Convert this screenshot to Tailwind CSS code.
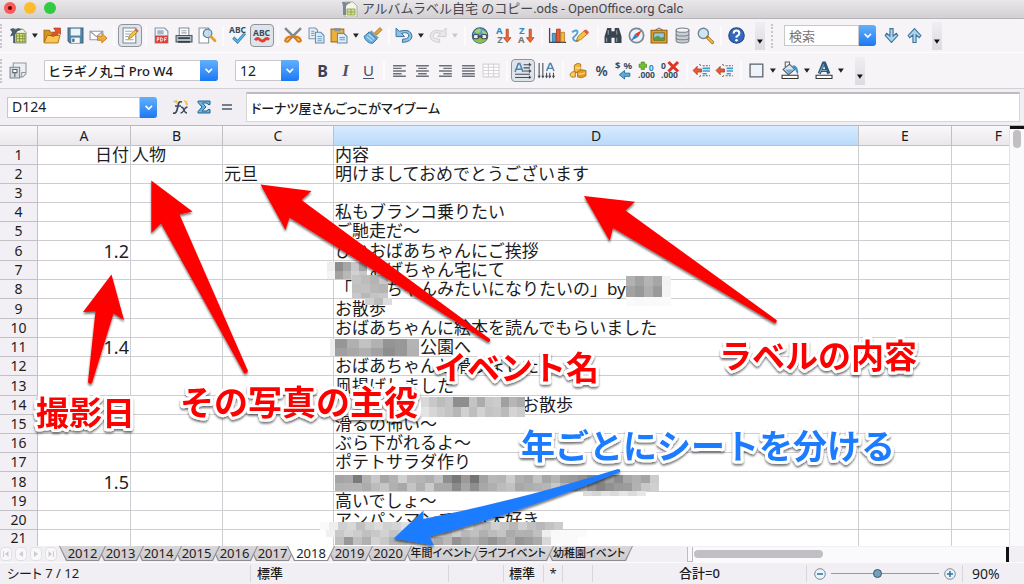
<!DOCTYPE html>
<html lang="ja">
<head>
<meta charset="utf-8">
<title>アルバムラベル自宅 のコピー.ods - OpenOffice.org Calc</title>
<script src="https://cdn.jsdelivr.net/npm/@tailwindcss/browser@4"></script>
</head>
<body class="bg-[#f5f3f6] text-[13px] text-[#1c1c1e] font-['Noto_Sans','Noto_Sans_CJK_JP',sans-serif] overflow-hidden">
<div class="relative flex min-h-screen flex-col">

<!-- Title bar -->
<header class="relative flex h-[19px] items-center justify-center border-b border-[#b5b3b6] bg-linear-to-b from-[#e9e7ea] to-[#d2d0d3]">
  <div class="absolute left-1 top-0.5 flex gap-2">
    <button aria-label="閉じる" class="flex size-3 items-center justify-center rounded-full bg-[#fc5b57]"><span class="size-1 rounded-full bg-[#5c0a08]"></span></button>
    <button aria-label="最小化" class="size-3 rounded-full bg-[#fdbc2e]"></button>
    <button aria-label="拡大" class="size-3 rounded-full bg-[#2fcb43]"></button>
  </div>
  <h1 class="flex items-center gap-1 text-[13px] leading-4 text-[#48464a] font-[Roboto,'Noto_Sans_CJK_JP',sans-serif]">
    <svg class="h-4 w-[17px]" viewBox="0 0 17 16"><path d="M4 1h8l4 4v11H4z" fill="#f2f5ea" stroke="#9aa58b" stroke-width=".8"/><path d="M6 8h8v6H6zM6 11h8M10 8v6" fill="#cfe08d" stroke="#8a9d4a" stroke-width=".8"/><path d="M1 1q3-1 4 1 3-2 5 0-3 0-5 3v9H2V5z" fill="#7b8894"/></svg>
    <span>アルバムラベル自宅 のコピー.ods - OpenOffice.org Calc</span>
  </h1>
</header>

<!-- Standard toolbar -->
<div role="toolbar" aria-label="標準" class="flex h-[34px] items-center border-b border-white bg-[#f6f4f7] [&_button]:flex [&_button]:h-[23px] [&_button]:shrink-0 [&_button]:items-center [&_button]:justify-center [&_svg]:h-[17px] [&_svg]:w-auto [&_svg]:shrink-0 [&_svg]:overflow-visible">
  <span class="mr-[5px] h-6 border-l-2 border-dotted border-[#c8c6ca]"></span>
  <button aria-label="新規" class="w-[23px]"><svg viewBox="0 0 16 16"><path d="M4 2h8l3 3v10H4z" fill="#f1f4e4" stroke="#6e7a55" stroke-width=".8"/><path d="M6 6h8v8H6z" fill="#d8e56c" stroke="#72813a" stroke-width=".8"/><path d="M6 8.500h8M6 11h8M9 6v8M12 6v8" stroke="#72813a" stroke-width=".7"/><path d="M0 2l3-1 2 1.500L8 1l3 1.500L7 4 5 7v8H3V8L0 9l2-4z" fill="#4b5d6b"/></svg></button>
  <button aria-label="新規の種類" class="w-[11px]"><svg viewBox="0 0 6 16"><path d="M0 6h5.500L2.700 10z" fill="#222"/></svg></button>
  <button aria-label="開く" class="w-[23px]"><svg viewBox="0 0 17 16"><path d="M1 14V3h5l1 2h7v9z" fill="#d99220" stroke="#a96a12"/><path d="M1 15l3-7h12l-2 7z" fill="#fbc654" stroke="#a96a12" stroke-width=".8"/><path d="M7 8l5-4-2-3h6.500v6l-2-1.500L10 9z" fill="#e2562a" stroke="#a9340f" stroke-width=".6"/></svg></button>
  <button aria-label="保存" class="w-[23px]"><svg viewBox="0 0 16 16"><path d="M1 1h14v14H3l-2-2z" fill="#4f86a8" stroke="#3a6179"/><path d="M3.500 1.500h9v6.500h-9z" fill="#edf5fa"/><path d="M4 10h8v5H4z" fill="#f4f8fb"/><path d="M5 11h2v3H5z" fill="#3a6179"/></svg></button>
  <button aria-label="メール" class="w-[23px]"><svg viewBox="0 0 17 16"><path d="M1 4h12v8H1z" fill="#fff" stroke="#9098a2"/><path d="M1 4l6 5 6-5" fill="none" stroke="#9098a2"/><path d="M8 8.500h4V6l5 4.500-5 4.500v-2.500H8z" fill="#f2a93b" stroke="#b7741a" stroke-width=".7"/></svg></button>
  <span class="mx-[3px] h-5 w-0.5 bg-[#fbfafc]"></span>
  <button aria-label="編集" aria-pressed="true" class="w-6 rounded-sm border border-[#8f949c] bg-[#dfe4ea]"><svg viewBox="0 0 16 16"><path d="M1 1h12v14H1z" fill="#fff" stroke="#7b8794"/><path d="M3 4h7M3 6.500h5M3 9h3M3 12h8" stroke="#9aa6b4"/><path d="M6 11l1-3 6-6 2 2-6 6z" fill="#f6c343" stroke="#a0701a" stroke-width=".7"/><path d="M12 3l1.500-1.500 2 2L14 5z" fill="#e4584e"/></svg></button>
  <span class="mx-[3px] h-5 w-0.5 bg-[#fbfafc]"></span>
  <button aria-label="PDF" class="w-[23px]"><svg viewBox="0 0 16 16"><path d="M2 1h9l3 3v11H2z" fill="#f3f5f7" stroke="#8a94a0"/><path d="M4 3h6v4H4z" fill="#9fb8d0"/><path d="M2 8h12v7H2z" fill="#dd3b32"/><path d="M4 13.500V10h1.500v1.800H4M7.200 10v3.500q2 0 2-1.700t-2-1.800M11 13.500V10h2M11 11.800h1.500" fill="none" stroke="#fff" stroke-width=".8"/></svg></button>
  <button aria-label="印刷" class="w-[23px]"><svg viewBox="0 0 17 16"><path d="M4 1h9v7H4z" fill="#fff" stroke="#7f8a95"/><path d="M6 3.500h5M6 5.500h5" stroke="#9aa6b4"/><path d="M1 8h15v6H1z" fill="#b4bcc3" stroke="#4c565f"/><path d="M3 10.500h11M3 14h11" stroke="#36404a" stroke-width="1.500"/></svg></button>
  <button aria-label="印刷プレビュー" class="w-[23px]"><svg viewBox="0 0 17 16"><path d="M1 1h9v14H1z" fill="#fff" stroke="#8a94a0"/><circle cx="9" cy="6" r="4" fill="#b9dcf2" fill-opacity=".9" stroke="#6d7f90" stroke-width="1.200"/><path d="M12 9l4 4" stroke="#e0a12c" stroke-width="2.500" stroke-linecap="round"/></svg></button>
  <span class="mx-[3px] h-5 w-0.5 bg-[#fbfafc]"></span>
  <button aria-label="スペルチェック" class="w-[23px]"><svg viewBox="0 0 17 16"><text x="0" y="6" font-size="8" font-weight="700" fill="#3a4c60">ABC</text><path d="M4 10l4 4 7-8" fill="none" stroke="#2c7fb5" stroke-width="2.800"/><path d="M4 10l4 4 7-8" fill="none" stroke="#6fc0ea" stroke-width="1.100"/></svg></button>
  <button aria-label="自動スペルチェック" aria-pressed="true" class="w-6 rounded-sm border border-[#8f949c] bg-[#dfe4ea]"><svg viewBox="0 0 17 16"><text x="0" y="8" font-size="8" font-weight="700" fill="#3a4c60">ABC</text><path d="M2 12.500q2-3 4.500-.5t4.500 0 4 0" fill="none" stroke="#e0412f" stroke-width="2.800"/></svg></button>
  <span class="mx-[3px] h-5 w-0.5 bg-[#fbfafc]"></span>
  <button aria-label="切り取り" class="w-[23px]"><svg viewBox="0 0 17 16"><path d="M1 1l10 10M16 1L6 11" stroke="#7d8790" stroke-width="2.200"/><path d="M10 9q5 0 6 4-3 3-6-4zM7 9q-5 0-6 4 3 3 6-4z" fill="#f7c27a" stroke="#d97c15" stroke-width="1.800"/></svg></button>
  <button aria-label="コピー" class="w-[23px]"><svg viewBox="0 0 16 16"><path d="M1 1h6l2 2v8H1z" fill="#e7f0f8" stroke="#7d93a8"/><path d="M7 5h5l3 3v7H7z" fill="#d7e9f6" stroke="#6b8aa5"/><path d="M3 4h3M3 6h3M3 8h3M9 9h4M9 11h4M9 13h4" stroke="#6fa3c8"/></svg></button>
  <button aria-label="貼り付け" class="w-[23px]"><svg viewBox="0 0 17 16"><path d="M1 2h12v12H1z" fill="#eeb03a" stroke="#a8701a"/><path d="M4 1h6v3H4z" fill="#8b949d"/><path d="M7 6h6l3 3v6H7z" fill="#dcecf8" stroke="#6b8aa5"/><path d="M9 10h5M9 12h5" stroke="#6fa3c8"/></svg></button>
  <button aria-label="貼り付けの種類" class="w-[11px]"><svg viewBox="0 0 6 16"><path d="M0 6h5.500L2.700 10z" fill="#222"/></svg></button>
  <button aria-label="書式のコピー" class="w-[23px]"><svg viewBox="0 0 17 16"><path d="M10 5.500L15 .5 17 2.500l-5 5z" fill="#e3a23d" stroke="#9b6715" stroke-width=".7"/><path d="M7 3l7 7-2 1.500L5.500 5z" fill="#8a9aa8"/><path d="M5 4.500l7 7-4 4Q2 15 0 9z" fill="#6cb1e0" stroke="#2e6f9e" stroke-width=".9"/><path d="M2.500 9l5 4M4.500 7l5 4.500" stroke="#c3e3f6"/></svg></button>
  <span class="mx-[3px] h-5 w-0.5 bg-[#fbfafc]"></span>
  <button aria-label="元に戻す" class="w-[23px]"><svg viewBox="0 0 17 16"><path d="M1 1v8h8L6 6q7-2 7 2.500-1 3-6 3v3q9-.5 9-6Q15 1 4 4z" fill="#8fc1e3" stroke="#386f99" stroke-width=".9"/></svg></button>
  <button aria-label="元に戻す履歴" class="w-[11px]"><svg viewBox="0 0 6 16"><path d="M0 6h5.500L2.700 10z" fill="#222"/></svg></button>
  <button aria-label="やり直し" disabled class="w-[23px]"><svg viewBox="0 0 17 16"><path d="M16 1v8H8l3-3Q4 4 4 8.500q1 3 6 3v3Q1 14 1 8.500 2 1 13 4z" fill="#e9e7ea" stroke="#cfcdd1" stroke-width=".9"/></svg></button>
  <button aria-label="やり直し履歴" disabled class="w-[11px]"><svg viewBox="0 0 6 16"><path d="M0 6h5.500L2.700 10z" fill="#c9c7cb"/></svg></button>
  <span class="mx-[3px] h-5 w-0.5 bg-[#fbfafc]"></span>
  <button aria-label="ハイパーリンク" class="w-[23px]"><svg viewBox="0 0 17 16"><circle cx="8.500" cy="8" r="7.300" fill="#5da0cc" stroke="#2f5f86"/><path d="M3 4q4-4 6-2 1 3-3 4zM10 3q5 1 5 4l-4-1z" fill="#a8cf6a"/><path d="M1.500 9h14q-1 6-7 6t-7-6z" fill="#8fc04f"/><rect x="2" y="7" width="5.500" height="4" rx="2" fill="#eee" stroke="#3d4a55"/><rect x="9.500" y="7" width="5.500" height="4" rx="2" fill="#eee" stroke="#3d4a55"/><path d="M6 9h5" stroke="#3d4a55" stroke-width="1.500"/></svg></button>
  <button aria-label="昇順" class="w-[23px]"><svg viewBox="0 0 16 16"><text x="1" y="7" font-size="9" font-weight="700" fill="#2a8ac7">A</text><text x="2" y="15" font-size="9" font-weight="700" fill="#777">Z</text><path d="M10.500 2h2v8H15l-3.500 4.500L8 10h2.500z" fill="#ec6a3a" stroke="#b43c12" stroke-width=".7"/></svg></button>
  <button aria-label="降順" class="w-[23px]"><svg viewBox="0 0 16 16"><text x="1" y="7" font-size="9" font-weight="700" fill="#2a8ac7">Z</text><text x="0" y="15" font-size="9" font-weight="700" fill="#777">A</text><path d="M10.500 2h2v8H15l-3.500 4.500L8 10h2.500z" fill="#ec6a3a" stroke="#b43c12" stroke-width=".7"/></svg></button>
  <span class="mx-[3px] h-5 w-0.5 bg-[#fbfafc]"></span>
  <button aria-label="グラフ" class="w-[23px]"><svg viewBox="0 0 17 16"><path d="M1.500 1v13.500H17" fill="none" stroke="#3d4a55" stroke-width="1.200"/><path d="M4 6h3.500v8H4z" fill="#4ea0d4" stroke="#24628c" stroke-width=".7"/><path d="M8 2h3.500v12H8z" fill="#ea5b33" stroke="#9e2e0e" stroke-width=".7"/><path d="M12 5h3.500v9H12z" fill="#f5ba3e" stroke="#a8701a" stroke-width=".7"/></svg></button>
  <button aria-label="図形描画" class="w-[23px]"><svg viewBox="0 0 17 16"><path d="M1 5q4-3 5-1t-4 6q0 4 5 3" fill="none" stroke="#4aa3dc" stroke-width="1.800"/><path d="M5 13l1.500-4L13 3l3 3-7 6z" fill="#f6c343" stroke="#a0701a" stroke-width=".8"/><path d="M12 4l2-2 3 3-2 2z" fill="#e4584e"/></svg></button>
  <span class="mx-[3px] ml-[5px] h-5 w-0.5 bg-[#fbfafc]"></span>
  <button aria-label="検索と置換" class="w-[23px]"><svg viewBox="0 0 17 16"><path d="M3 1h4v3h3V1h4l2.500 8v6H10v-5H7v5H.5V9z" fill="#39444e"/><path d="M2.500 10v4M12 10v4M4 3v4M12 3v4" stroke="#93a1ad"/></svg></button>
  <button aria-label="ナビゲーター" class="w-[23px]"><svg viewBox="0 0 16 16"><circle cx="8" cy="8" r="6.700" fill="#e9f3fb" stroke="#7a8794" stroke-width="1.600"/><path d="M13 3L9.500 9.500l-3-3z" fill="#e0392b"/><path d="M3 13l3.500-6.500 3 3z" fill="#3080c4"/></svg></button>
  <button aria-label="ギャラリー" class="w-[23px]"><svg viewBox="0 0 17 16"><path d="M5 3l3.500-2L12 3" fill="none" stroke="#777"/><path d="M1 3h15v12H1z" fill="#e5a024" stroke="#8f5c10"/><path d="M3.500 5.500h10v7h-10z" fill="#8ccdf0" stroke="#5a3d10" stroke-width=".6"/><path d="M3.500 10l4-2 3 2 3-1v3.500h-10z" fill="#5d9a40"/></svg></button>
  <button aria-label="データソース" class="w-[23px]"><svg viewBox="0 0 16 16"><path d="M2 3v10q0 2 6 2t6-2V3z" fill="#c9ced3" stroke="#79828a"/><ellipse cx="8" cy="3" rx="6" ry="2" fill="#f2f4f6" stroke="#79828a"/><path d="M2 6.500q0 2 6 2t6-2M2 10q0 2 6 2t6-2" fill="none" stroke="#79828a"/></svg></button>
  <button aria-label="ズーム" class="w-[23px]"><svg viewBox="0 0 16 16"><circle cx="6" cy="6" r="4.800" fill="#cbe6f7" stroke="#77848f" stroke-width="1.300"/><path d="M10 10l4.500 4.500" stroke="#a0701a" stroke-width="3.200" stroke-linecap="round"/><path d="M10.500 10.500l4 4" stroke="#f3bb45" stroke-width="1.800" stroke-linecap="round"/></svg></button>
  <span class="mx-[3px] h-5 w-0.5 bg-[#fbfafc]"></span>
  <button aria-label="ヘルプ" class="w-[23px]"><svg viewBox="0 0 16 16"><circle cx="8" cy="8" r="7.300" fill="#3568b8" stroke="#234a8d"/><path d="M5.300 6q0-2.700 2.700-2.700T10.700 6Q10.700 7.300 8 9v1.200" fill="none" stroke="#fff" stroke-width="1.900"/><circle cx="8" cy="12.500" r="1.200" fill="#fff"/></svg></button>
  <div class="ml-[7px] mr-1.5 flex h-7 w-[10px] items-end bg-linear-to-b from-[#f0eef2] to-[#dddbdf]"><button aria-label="ツールバーの表示" class="w-[10px]"><svg viewBox="0 0 6 16"><path d="M0 9h5.500L2.700 13z" fill="#111"/></svg></button></div>
  <span class="mr-[11px] h-6 border-l-2 border-dotted border-[#c8c6ca]"></span>
  <div class="flex h-[21px] w-[92px] shrink-0">
    <input aria-label="検索" placeholder="検索" class="w-[75px] min-w-0 border border-[#c9c7cb] bg-white px-1 text-[13px] leading-4 placeholder:text-[#77757a]">
    <button aria-label="検索履歴" class="!h-[21px] w-[17px] rounded-r-[3px] bg-linear-to-b from-[#62b0fb] to-[#1a78f5]"><svg viewBox="0 0 9 16"><path d="M1.500 6.500l3 3 3-3" fill="none" stroke="#fff" stroke-width="1.500"/></svg></button>
  </div>
  <button aria-label="次を検索" class="ml-1 w-[23px]"><svg viewBox="0 0 16 16"><path d="M6.500 1.500h3v7l3-2.500 1.500 2-6 6.500L2 8l1.500-2 3 2.500z" fill="#a9d3ee" stroke="#3f7397"/></svg></button>
  <button aria-label="前を検索" class="w-[23px]"><svg viewBox="0 0 16 16"><path d="M6.500 14.500h3v-7l3 2.500L14 8 8 1.500 2 8l1.500 2 3-2.500z" fill="#a9d3ee" stroke="#3f7397"/></svg></button>
  <div class="ml-1.5 flex h-7 w-[10px] items-end bg-linear-to-b from-[#f0eef2] to-[#dddbdf]"><button aria-label="検索バーの表示" class="w-[10px]"><svg viewBox="0 0 6 16"><path d="M0 9h5.500L2.700 13z" fill="#111"/></svg></button></div>
</div>

<!-- Formatting toolbar -->
<div role="toolbar" aria-label="書式設定" class="flex h-9 items-center border-b border-[#d3d1d5] bg-[#f6f4f7] [&_button]:flex [&_button]:h-[23px] [&_button]:shrink-0 [&_button]:items-center [&_button]:justify-center [&_svg]:h-[17px] [&_svg]:w-auto [&_svg]:shrink-0 [&_svg]:overflow-visible">
  <span class="mr-[5px] h-6 border-l-2 border-dotted border-[#c8c6ca]"></span>
  <button aria-label="スタイル" class="w-[23px]"><svg viewBox="0 0 17 16"><path d="M4 1h12v10l-3 3H4z" fill="#edf0f3" stroke="#8e98a3"/><path d="M1 5h9v10H1z" fill="#d5dae0" stroke="#7b8590"/><path d="M3.500 7h4v3h-4zM5.500 10v4" fill="#fff" stroke="#5f6973"/><path d="M12 14v-4h4" fill="#fff" stroke="#8e98a3"/></svg></button>
  <div class="relative ml-[14px] h-[21px] w-[174px] shrink-0">
    <select aria-label="フォント名" class="h-[21px] w-full appearance-none rounded-r-[3px] border border-[#c9c7cb] bg-white pl-[3px] pr-5 text-[13px] font-medium leading-[18px]"><option>ヒラギノ丸ゴ Pro W4</option></select>
    <span class="pointer-events-none absolute right-0 top-0 flex h-[21px] w-[18px] items-center justify-center rounded-r-[3px] bg-linear-to-b from-[#62b0fb] to-[#1a78f5]"><svg viewBox="0 0 9 16"><path d="M1.500 6.500l3 3 3-3" fill="none" stroke="#fff" stroke-width="1.500"/></svg></span>
  </div>
  <div class="relative ml-[17px] h-[21px] w-16 shrink-0">
    <select aria-label="フォントサイズ" class="h-[21px] w-full appearance-none rounded-r-[3px] border border-[#c9c7cb] bg-white pl-1 pr-5 text-[14px] leading-[18px]"><option>12</option></select>
    <span class="pointer-events-none absolute right-0 top-0 flex h-[21px] w-[18px] items-center justify-center rounded-r-[3px] bg-linear-to-b from-[#62b0fb] to-[#1a78f5]"><svg viewBox="0 0 9 16"><path d="M1.500 6.500l3 3 3-3" fill="none" stroke="#fff" stroke-width="1.500"/></svg></span>
  </div>
  <button aria-label="太字" class="ml-3 w-[23px] text-[16px] font-bold text-[#3b4252]">B</button>
  <button aria-label="斜体" class="w-[23px] font-['Liberation_Serif'] text-[17px] font-bold italic text-[#4b5262]">I</button>
  <button aria-label="下線" class="w-[23px] text-[15px] text-[#4b5262] underline underline-offset-2">U</button>
  <span class="mx-[3px] h-5 w-0.5 bg-[#fbfafc]"></span>
  <button aria-label="左揃え" class="w-[23px]"><svg viewBox="0 0 14 16"><path d="M1 3.500h12M1 6h8M1 8.500h12M1 11h8M1 13.500h12" stroke="#6c7078" stroke-width="1.400"/></svg></button>
  <button aria-label="中央揃え" class="w-[23px]"><svg viewBox="0 0 14 16"><path d="M1 3.500h12M3 6h8M1 8.500h12M3 11h8M1 13.500h12" stroke="#6c7078" stroke-width="1.400"/></svg></button>
  <button aria-label="右揃え" class="w-[23px]"><svg viewBox="0 0 14 16"><path d="M1 3.500h12M5 6h8M1 8.500h12M5 11h8M1 13.500h12" stroke="#6c7078" stroke-width="1.400"/></svg></button>
  <button aria-label="両端揃え" class="w-[23px]"><svg viewBox="0 0 14 16"><path d="M1 3.500h12M1 6h12M1 8.500h12M1 11h12M1 13.500h12" stroke="#6c7078" stroke-width="1.400"/></svg></button>
  <button aria-label="セルの結合" disabled class="w-[23px]"><svg viewBox="0 0 17 16"><path d="M1 2h15v12H1zM1 5h15M1 8h15M1 11h15M6 2v12M11 2v12" fill="#fff" stroke="#d4d2d6"/></svg></button>
  <span class="mx-[3px] h-5 w-0.5 bg-[#fbfafc]"></span>
  <button aria-label="左から右" aria-pressed="true" class="w-6 rounded-sm border border-[#8f949c] bg-[#dfe4ea]"><svg viewBox="0 0 17 16"><path d="M1 9.500L4 1.500h1.500L8.500 9.500M2.300 6.800h5" fill="none" stroke="#4d86b2" stroke-width="1.500"/><path d="M9 2.500h6M9 5.500h6M9 8.500h6M1 11.500h14M1 14.500h14" stroke="#444b55"/><path d="M14 .5l2.500 2-2.500 2zM14 6.500l2.500 2-2.500 2zM14 12.500l2.500 2-2.500 1.500z" fill="#444b55"/></svg></button>
  <button aria-label="上から下" class="w-[23px]"><svg viewBox="0 0 17 16"><path d="M9 8.500L12 1.500h1L16 8.500M10 6h5" fill="none" stroke="#4d86b2" stroke-width="1.400"/><path d="M2 1v13M5.500 1v13M9 10v4M12 10v4M15.500 10v4" stroke="#444b55"/><path d="M.5 13h3L2 15.500zM4 13h3l-1.500 2.500zM7.500 13h3L9 15.500zM10.500 13h3L12 15.500zM14 13h3l-1.500 2.500z" fill="#444b55"/></svg></button>
  <span class="mx-[3px] ml-1 h-5 w-0.5 bg-[#fbfafc]"></span>
  <button aria-label="通貨" class="w-[23px]"><svg viewBox="0 0 17 16"><path d="M5 3q3-3 6-1v8H5z" fill="#f3b53c" stroke="#a96f14" stroke-width=".8"/><path d="M1 12q0-3 5-3v5q-5 1-5-2z" fill="#f7cb66" stroke="#a96f14" stroke-width=".8"/><path d="M8 9q4-3 8-1v5q-4 3-8 1z" fill="#e79d25" stroke="#a96f14" stroke-width=".8"/><path d="M6 5.500h5M9 11q3 1 6-1" stroke="#ffe6a3" fill="none"/></svg></button>
  <button aria-label="パーセント" class="w-[23px] text-[14px] font-semibold text-[#3b4a5c]">%</button>
  <button aria-label="標準の書式" class="w-[23px]"><svg viewBox="0 0 17 16"><text x="0" y="7" font-size="9" font-weight="700" fill="#3a4c60">$</text><text x="8" y="7" font-size="9" font-weight="700" fill="#3a4c60">%</text><path d="M4 12l5-4v2.500h5v3H9V16z" fill="#56aede" stroke="#22658f" stroke-width=".8"/></svg></button>
  <button aria-label="小数点以下の桁を追加" class="w-[23px]"><svg viewBox="0 0 17 16"><path d="M3 0h3v2h2v3H6v2H3V5H1V2h2z" fill="#6fc22d" stroke="#3d7d12" stroke-width=".6"/><text x="10" y="8" font-size="8" font-weight="700" fill="#2a8ac7">0</text><text x="0" y="15" font-size="8" font-weight="700" fill="#3a4c60">.000</text></svg></button>
  <button aria-label="小数点以下の桁を削除" class="w-[23px]"><svg viewBox="0 0 17 16"><text x="0" y="7" font-size="8" font-weight="700" fill="#3a4c60">0</text><text x="0" y="15" font-size="8" font-weight="700" fill="#3a4c60">.000</text><path d="M7 0l9 9M16 0l-9 9" stroke="#dd3424" stroke-width="2.800"/></svg></button>
  <span class="mx-[3px] ml-1 h-5 w-0.5 bg-[#fbfafc]"></span>
  <button aria-label="インデントを減らす" class="w-[23px]"><svg viewBox="0 0 17 16"><path d="M6 2l2 2M6 14l2-2M9 3.500h7M9 13h7" stroke="#666e78" stroke-dasharray="2 1"/><path d="M9 6h7M9 8.500h7M9 11h4" stroke="#3e9bd2" stroke-width="1.500"/><path d="M0 8l4-4v2.500h4v3H4V12z" fill="#e8592f" stroke="#a1300d" stroke-width=".6"/></svg></button>
  <button aria-label="インデントを増やす" class="w-[23px]"><svg viewBox="0 0 17 16"><path d="M6 2l2 2M6 14l2-2M9 3.500h7M9 13h7" stroke="#666e78" stroke-dasharray="2 1"/><path d="M10 6h6M10 8.500h6M10 11h4" stroke="#3e9bd2" stroke-width="1.500"/><path d="M0 8l4-4v2.500h4v3H4V12z" fill="#e8592f" stroke="#a1300d" stroke-width=".6"/></svg></button>
  <span class="mx-[3px] h-5 w-0.5 bg-[#fbfafc]"></span>
  <button aria-label="外枠" class="w-[23px]"><svg viewBox="0 0 14 16"><path d="M1 2h12v12H1z" fill="#eef3f9" stroke="#5b626c" stroke-width="1.200"/></svg></button>
  <button aria-label="外枠の種類" class="w-[11px]"><svg viewBox="0 0 6 16"><path d="M0 6h5.500L2.700 10z" fill="#222"/></svg></button>
  <button aria-label="背景色" class="w-[23px]"><svg viewBox="0 0 17 16"><path d="M2 7l6-5 5 5-6 5z" fill="#dfe6ec" stroke="#55606b"/><path d="M4 7h8l-5 4z" fill="#6fb0d8"/><path d="M4 5V0h4v3" fill="none" stroke="#55606b"/><path d="M11 3q6 0 5 9l-2-3q0-3-3-3z" fill="#3f95cc"/><path d="M1 12.500h15v3H1z" fill="#fff" stroke="#333"/></svg></button>
  <button aria-label="背景色の種類" class="w-[11px]"><svg viewBox="0 0 6 16"><path d="M0 6h5.500L2.700 10z" fill="#222"/></svg></button>
  <button aria-label="フォントの色" class="w-[23px]"><svg viewBox="0 0 17 16"><path d="M4 11L8 1h1l4 10M6 8h5" fill="none" stroke="#2d5876" stroke-width="3"/><path d="M4.200 10.500L8.300 2M6 8h5" stroke="#7fb5d6" stroke-width=".9"/><path d="M1 12.500h15v3H1z" fill="#fff" stroke="#333"/></svg></button>
  <button aria-label="フォントの色の種類" class="w-[11px]"><svg viewBox="0 0 6 16"><path d="M0 6h5.500L2.700 10z" fill="#222"/></svg></button>
  <div class="ml-2 flex h-7 w-[10px] items-end bg-linear-to-b from-[#f0eef2] to-[#dddbdf]"><button aria-label="書式バーの表示" class="w-[10px]"><svg viewBox="0 0 6 16"><path d="M0 9h5.500L2.700 13z" fill="#111"/></svg></button></div>
</div>

<!-- Formula bar -->
<div class="flex h-[37px] items-center border-b border-[#b9b7bb] bg-[#f1eff3] pl-[7px] pr-1">
  <div class="flex h-[21px] w-[150px] shrink-0">
    <input aria-label="名前ボックス" value="D124" class="w-[133px] min-w-0 border border-[#c9c7cb] bg-white px-1 text-[14px] leading-[18px]">
    <button aria-label="名前の一覧" class="flex w-[17px] items-center justify-center rounded-r-[3px] bg-linear-to-b from-[#62b0fb] to-[#1a78f5]"><svg viewBox="0 0 9 16" class="h-[17px]"><path d="M1.500 6.500l3 3 3-3" fill="none" stroke="#fff" stroke-width="1.500"/></svg></button>
  </div>
  <button aria-label="関数ウィザード" class="ml-3 flex w-[23px] justify-center"><svg viewBox="0 0 17 16" class="h-4 w-[17px]"><path d="M1 2l2 1 1-2 1 2 2 0-2 2M12 1l1 2 2-1-1 2 2 1-2 1" fill="#f8cf3f" stroke="#efb81f" stroke-width=".8"/><path d="M1 14q3 1 4-3l1.500-6Q7 2 10 3M3 7h6" fill="none" stroke="#3a4c60" stroke-width="1.700"/><path d="M9 8q2 0 3 3t3 3M15.500 8q-2 0-3.500 3t-3.500 3" fill="none" stroke="#3a4c60" stroke-width="1.400"/></svg></button>
  <button aria-label="合計" class="flex w-[23px] justify-center"><svg viewBox="0 0 16 16" class="h-4 w-4"><path d="M2 2h12v3.500h-2L11 4H6.500L10 8l-4 4h5l1-1.500h2V14H2v-1.500L6 8 2 3.500z" fill="#67b4de" stroke="#22658f"/></svg></button>
  <button aria-label="関数" class="flex w-[23px] justify-center"><svg viewBox="0 0 12 16" class="h-4 w-3"><path d="M1 6h10M1 10h10" stroke="#4c5868" stroke-width="1.600"/></svg></button>
  <input aria-label="数式入力" value="ドーナツ屋さんごっこがマイブーム" class="ml-2 h-[30px] min-w-0 flex-1 border border-t-2 border-[#d8d6da] border-t-[#bdbbbf] bg-white px-1 text-[13px] font-medium [font-feature-settings:'palt']">
</div>

<!-- Sheet -->
<div class="flex">
  <table class="min-w-0 flex-1 table-fixed border-separate border-spacing-0 bg-white [&_td]:overflow-visible [&_td]:whitespace-nowrap [&_td]:border-b [&_td]:border-r [&_td]:border-[#cfcdd1] [&_td]:px-px [&_td]:text-[17px] [&_td]:leading-[18px] [&_th]:border-b [&_th]:border-r [&_th]:border-[#c2c0c4] [&_th]:bg-[#f2f0f4] [&_th]:text-[14px] [&_th]:font-normal [&_th]:leading-[18px]">
    <colgroup><col class="w-[38px]"><col class="w-[93px]"><col class="w-[92px]"><col class="w-[111px]"><col><col class="w-[93px]"><col class="w-[57px]"></colgroup>
    <thead class="h-5 [&_th]:bg-linear-to-b [&_th]:from-[#f9f8fa] [&_th]:to-[#eae8ec]"><tr><th aria-label="すべて選択"></th><th scope="col">A</th><th scope="col">B</th><th scope="col">C</th><th scope="col" class="!from-[#d9ebfe] !to-[#b8dafb]">D</th><th scope="col">E</th><th scope="col" class="!border-r-0 pl-9">F</th></tr></thead>
    <tbody class="[&_tr>td:last-child]:border-r-0 [&_tr>td:nth-child(2)]:text-right">
      <tr class="h-[19px]"><th scope="row">1</th><td>日付</td><td>人物</td><td></td><td>内容</td><td></td><td></td></tr>
      <tr class="h-[19px]"><th scope="row">2</th><td></td><td></td><td>元旦</td><td>明けましておめでとうございます</td><td></td><td></td></tr>
      <tr class="h-[19px]"><th scope="row">3</th><td></td><td></td><td></td><td></td><td></td><td></td></tr>
      <tr class="h-[19px]"><th scope="row">4</th><td></td><td></td><td></td><td>私もブランコ乗りたい</td><td></td><td></td></tr>
      <tr class="h-[19px]"><th scope="row">5</th><td></td><td></td><td></td><td>ご馳走だ〜</td><td></td><td></td></tr>
      <tr class="h-5"><th scope="row">6</th><td class="!text-[18px]">1.2</td><td></td><td></td><td>ひいおばあちゃんにご挨拶</td><td></td><td></td></tr>
      <tr class="h-[19px]"><th scope="row">7</th><td></td><td></td><td></td><td>　　おばちゃん宅にて</td><td></td><td></td></tr>
      <tr class="h-[19px]"><th scope="row">8</th><td></td><td></td><td></td><td>「　　ちゃんみたいになりたいの」by</td><td></td><td></td></tr>
      <tr class="h-5"><th scope="row">9</th><td></td><td></td><td></td><td>お散歩</td><td></td><td></td></tr>
      <tr class="h-[19px]"><th scope="row">10</th><td></td><td></td><td></td><td>おばあちゃんに絵本を読んでもらいました</td><td></td><td></td></tr>
      <tr class="h-[19px]"><th scope="row">11</th><td class="!text-[18px]">1.4</td><td></td><td></td><td>　　　　　公園へ</td><td></td><td></td></tr>
      <tr class="h-[19px]"><th scope="row">12</th><td></td><td></td><td></td><td>おばあちゃんと滑りました</td><td></td><td></td></tr>
      <tr class="h-5"><th scope="row">13</th><td></td><td></td><td></td><td>凧揚げしました</td><td></td><td></td></tr>
      <tr class="h-[19px]"><th scope="row">14</th><td></td><td></td><td></td><td>　　　　　　　　　　　お散歩</td><td></td><td></td></tr>
      <tr class="h-[19px]"><th scope="row">15</th><td></td><td></td><td></td><td>滑るの怖い〜</td><td></td><td></td></tr>
      <tr class="h-[19px]"><th scope="row">16</th><td></td><td></td><td></td><td>ぶら下がれるよ〜</td><td></td><td></td></tr>
      <tr class="h-[19px]"><th scope="row">17</th><td></td><td></td><td></td><td>ポテトサラダ作り</td><td></td><td></td></tr>
      <tr class="h-5"><th scope="row">18</th><td class="!text-[18px]">1.5</td><td></td><td></td><td></td><td></td><td></td></tr>
      <tr class="h-[19px]"><th scope="row">19</th><td></td><td></td><td></td><td>高いでしょ〜</td><td></td><td></td></tr>
      <tr class="h-[19px]"><th scope="row">20</th><td></td><td></td><td></td><td>アンパンマンチョコ大好き</td><td></td><td></td></tr>
      <tr class="h-4 [&>*]:!border-b-0 [&>*]:!leading-4"><th scope="row">21</th><td></td><td></td><td></td><td></td><td></td><td></td></tr>
    </tbody>
  </table>
  <div class="flex w-[15px] flex-col items-center border-l border-[#e4e2e6] bg-[#faf9fb]">
    <span class="h-[3px] w-full bg-[#111]"></span>
    <span class="mt-px h-[18px] w-2 rounded-full bg-[#c1bfc3]"></span>
  </div>
</div>

<!-- Sheet tabs and horizontal scrollbar -->
<div class="flex h-4 bg-[#f1eff3]">
  <div class="flex w-[59px] shrink-0 gap-[3px] pt-px [&_button]:flex [&_button]:h-[14px] [&_button]:w-3 [&_button]:items-center [&_button]:justify-center [&_button]:rounded-sm [&_button]:border [&_button]:border-[#e2e0e4] [&_button]:bg-[#f8f7f9] [&_svg]:h-2 [&_svg]:w-2">
    <button aria-label="最初のシート"><svg viewBox="0 0 8 8"><path d="M1.500 1v6" stroke="#ccc"/><path d="M6.500 1v6L3 4z" fill="#ccc"/></svg></button>
    <button aria-label="前のシート"><svg viewBox="0 0 8 8"><path d="M6 1v6L2 4z" fill="#ccc"/></svg></button>
    <button aria-label="次のシート"><svg viewBox="0 0 8 8"><path d="M2 1v6l4-3z" fill="#ccc"/></svg></button>
    <button aria-label="最後のシート"><svg viewBox="0 0 8 8"><path d="M6.500 1v6" stroke="#ccc"/><path d="M1.500 1v6L5 4z" fill="#ccc"/></svg></button>
  </div>
  <div role="tablist" class="flex flex-1 [&_button]:relative [&_button]:-mr-[9px] [&_button]:h-[15px] [&_button]:w-[47px] [&_button]:shrink-0 [&_button]:bg-[#8f8d91] [&_button]:pb-px [&_button]:text-[13px] [&_button]:[clip-path:polygon(0_0,100%_0,calc(100%-7px)_100%,7px_100%)] [&_span]:block [&_span]:h-[14px] [&_span]:bg-linear-to-b [&_span]:from-[#d9d7da] [&_span]:to-[#cfcdd0] [&_span]:text-center [&_span]:leading-[14px] [&_span]:[clip-path:polygon(1px_0,calc(100%-1px)_0,calc(100%-8px)_100%,8px_100%)]">
    <button role="tab" class="z-[11]"><span>2012</span></button>
    <button role="tab" class="z-[10]"><span>2013</span></button>
    <button role="tab" class="z-[9]"><span>2014</span></button>
    <button role="tab" class="z-[8]"><span>2015</span></button>
    <button role="tab" class="z-[7]"><span>2016</span></button>
    <button role="tab" class="z-[6]"><span>2017</span></button>
    <button role="tab" aria-selected="true" class="z-[12] !w-12"><span class="!from-white !to-white">2018</span></button>
    <button role="tab" class="z-[5]"><span>2019</span></button>
    <button role="tab" class="z-[4] !w-12"><span>2020</span></button>
    <button role="tab" class="z-[3] !w-[76px] !text-[11px] font-medium [font-feature-settings:'palt']"><span>年間イベント</span></button>
    <button role="tab" class="z-[2] !w-[84px] !text-[11px] font-medium [font-feature-settings:'palt']"><span>ライフイベント</span></button>
    <button role="tab" class="z-[1] !w-[88px] !text-[11px] font-medium [font-feature-settings:'palt']"><span>幼稚園イベント</span></button>
  </div>
  <div class="flex w-[337px] shrink-0 items-center">
    <span class="h-[15px] w-[6px] border border-t-0 border-[#bdbbbf] bg-[#f8f7f9]"></span>
    <div class="flex h-[15px] flex-1 items-center bg-[#faf9fb] pl-px"><span class="h-2 w-[129px] rounded-full bg-[#c1bfc3]"></span></div>
    <span class="mr-[15px] h-[15px] w-[3px] bg-[#111]"></span>
  </div>
</div>

<!-- Status bar -->
<footer class="flex flex-1 items-center border-t border-[#fbfafc] bg-[#f1eff3] [font-feature-settings:'palt'] [&>div]:flex [&>div]:h-[17px] [&>div]:items-center [&>div]:border-r [&>div]:border-[#d8d6da]">
  <div class="w-[251px] pl-[7px]">シート 7 / 12</div>
  <div class="w-[198px] pl-1.5 font-medium">標準</div>
  <div class="w-[55px]"></div>
  <div class="w-10 pl-[5px] font-medium">標準</div>
  <div class="w-[19px] justify-center">*</div>
  <div class="w-[30px]"></div>
  <div class="flex-1 justify-center font-medium">合計=0</div>
  <div class="w-[156px] justify-center gap-[5px]">
    <button aria-label="縮小"><svg viewBox="0 0 12 12" class="size-3"><circle cx="6" cy="6" r="5.300" fill="#eaf3f9" stroke="#7a8c9a"/><path d="M3 6h6" stroke="#2d729d" stroke-width="1.500"/></svg></button>
    <input type="range" aria-label="ズーム" min="0" max="100" value="43" class="h-3 w-[108px] appearance-none bg-[linear-gradient(#9a989c,#9a989c)] bg-size-[100%_1px] bg-center bg-no-repeat [&::-webkit-slider-thumb]:size-[9px] [&::-webkit-slider-thumb]:appearance-none [&::-webkit-slider-thumb]:rounded-full [&::-webkit-slider-thumb]:border [&::-webkit-slider-thumb]:border-[#3b5568] [&::-webkit-slider-thumb]:bg-[#6fa0bd]">
    <button aria-label="拡大"><svg viewBox="0 0 12 12" class="size-3"><circle cx="6" cy="6" r="5.300" fill="#eaf3f9" stroke="#7a8c9a"/><path d="M3 6h6M6 3v6" stroke="#2d729d" stroke-width="1.500"/></svg></button>
  </div>
  <div class="w-[61px] !border-r-0 pl-[9px] text-[14px]">90%</div>
</footer>

<!-- Annotations and redaction mosaics laid over the sheet -->
<svg class="pointer-events-none absolute left-0 top-0 z-20 h-[584px] w-[1024px]" viewBox="0 0 1024 584">
  <defs>
    <filter id="shade" x="-10%" y="-20%" width="120%" height="150%"><feDropShadow dx="0" dy="2" stdDeviation="1.200" flood-color="#000" flood-opacity=".55"/></filter>
  </defs>
  <g id="mosaic" shape-rendering="crispEdges"></g>
  <g fill="#ff0000" stroke-linejoin="round" filter="url(#shade)">
    <path d="M111.500 274.500L83 312l12.500-.5L88 382q1 3 4 1l21.500-69.500L124 320z"/>
    <path d="M151.300 180.500l41.200 31-13 3L248 371q-1 3-4 2l-83-149.500-9.700 9.500z"/>
    <path d="M260.500 184.500l51 6.500-10 9L490 339q1 3-2 3L289.500 217.500l-4 12.500z"/>
    <path d="M584 196l51 5.700-9.500 8.800L776.500 320q1 3-2 3L613 228l-3.300 13z"/>
  </g>
  <path d="M393.700 538.500L423.500 510.500l-.5 8.500Q520 500 618 469q3 0 2 3-98 40-190.500 64.500l4.500 9z" fill="#1d7bff" filter="url(#shade)"/>
  <g font-family="'Noto Sans CJK JP', sans-serif" font-weight="700" font-size="33" fill="#ff0000" stroke="#fff" stroke-width="6" stroke-linejoin="round" paint-order="stroke" filter="url(#shade)">
    <text x="36" y="425">撮影日</text>
    <text x="180" y="415" font-size="34">その写真の主役</text>
    <text x="434" y="380">イベント名</text>
    <text x="719" y="368">ラベルの内容</text>
    <text x="521" y="459" font-size="34" fill="#1d7bff">年ごとにシートを分ける</text>
  </g>
</svg>
</div>
<script>
// Mosaic strips: start x, y, cell width, cell height, then one grey level (hex digit pair) per cell
const strips = [
  [327,262,8,9,'ee 8e a6 c8 a4'], [327,271,8,8,'f4 a2 b8 d2 c6'],
  [352,275,9,9,'c4 bc b4 c8'], [352,284,9,9,'c0 c2 b8 b4'], [352,293,9,5,'c8 b8 c4 c8'], [365,298,9,7,'d0 bc dc'],
  [626,276,9,10,'b2 a2 b4 a6 f2'], [626,286,9,11,'a2 98 ae 9a f4'], [626,297,9,9,'fa f8 fa fa fa'],
  [330,339,5,17,'ee'], [335,339,12,9,'96 b0 c2 b2 94 98 b4'], [335,348,12,8,'a0 a8 b0 a2 8e 98 b2'],
  [421,397,8,10,'d8 c8 bc c4 8e 8e c4 ac c8 cc a0 b6 ac'], [421,407,8,10,'e4 d6 cc c4 b6 d0 be d2 c4 c8 ba d4 cc'],
  [335,475,9,8,'a4 a8 7a b2 c8 a6 b2 d0 b8 b4 ae c0 8e 78 9a 74 a2 b8 b4 cc b0 a8 c2 a6 b4 9e 9a 92 84 8e a0 8c a8 b0 a4 cc'],
  [335,483,9,8,'b2 b4 b4 ac bc c6 b0 a8 c4 b0 ca a8 a8 8a a6 8e a8 b0 bc c2 a8 ae b2 b6 c8 b4 9e a8 92 84 90 9a 9c b2 c8 d0'],
  [583,491,9,5,'dc d4 e2 da e6 dc e8'],
  [320,522,9,8,'fa ee d0 d8 c0 d2 dc d0 d4 e0 e2 cc c4 d6 c0 ca d8 c2 bc d0 c6 b8 ce c0 b8 c2 cc'],
  [326,530,9,7,'f0 c8 d4 cc c0 c8 d2 c4 cc c6 d4 c2 ca be cc b8 c0 b0 bc c4 aa b2 b0 c0 ee f8 fa fa fa'],
  [335,537,9,8,'c0 98 c0 b0 d2 c8 b4 b0 be c8 b6 a8 b8 92 a4 ae a0 94 a6 b0 96 9e aa d8 fa fa fa']
];
const layer = document.getElementById('mosaic');
for (const [x, y, w, h, tones] of strips) {
  tones.split(' ').forEach((tone, i) => {
    const r = document.createElementNS('http://www.w3.org/2000/svg', 'rect');
    r.setAttribute('x', x + i * w);
    r.setAttribute('y', y);
    r.setAttribute('width', w);
    r.setAttribute('height', h);
    r.setAttribute('fill', '#' + tone + tone + tone);
    layer.appendChild(r);
  });
}
</script>
</body>
</html>
